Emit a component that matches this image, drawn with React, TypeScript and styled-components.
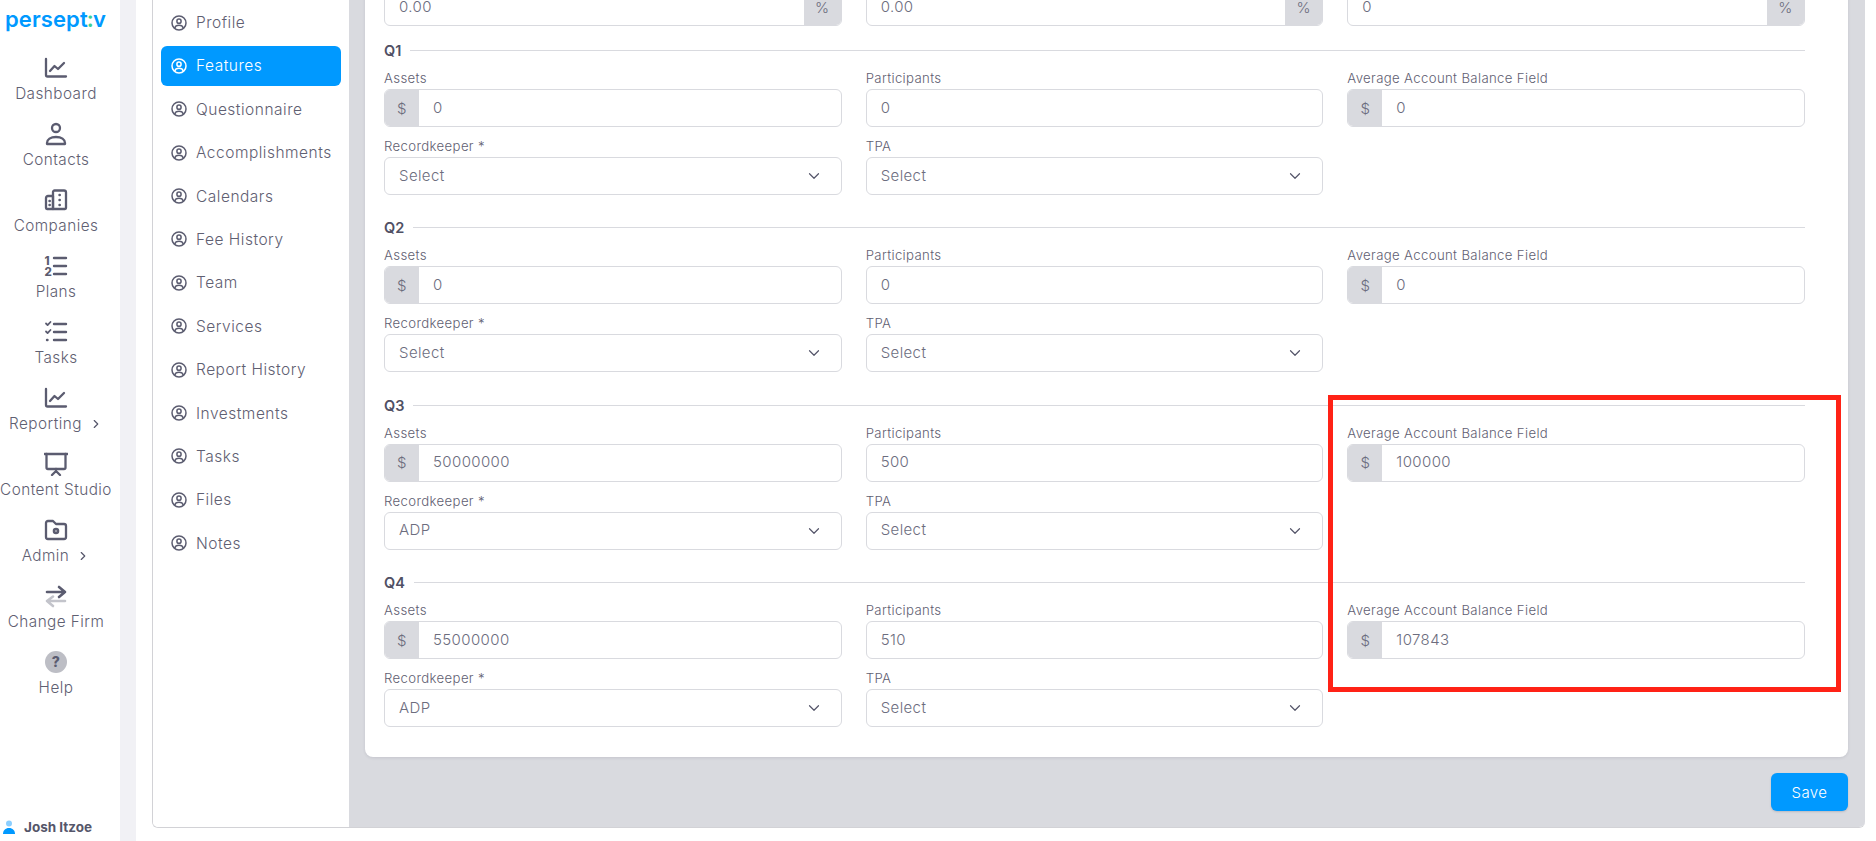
import React from 'react';
import styled, { createGlobalStyle } from 'styled-components';
import { ChevronDown, ChevronRight } from 'lucide-react';

const GlobalStyle = createGlobalStyle`
  html, body {
    margin: 0;
    padding: 0;
    background: #ffffff;
  }
  body {
    font-family: Inter, "Open Sans", sans-serif;
    font-weight: 300;
    color: #5f6072;
    overflow: hidden;
  }
`;

const Page = styled.div`
  position: relative;
  display: flex;
  width: 1876px;
  height: 841px;
  overflow: hidden;
`;

const Rail = styled.nav`
  width: 120px;
  flex-shrink: 0;
  display: flex;
  flex-direction: column;
  background: #ffffff;
`;

const Logo = styled.div`
  height: 43px;
  padding: 5px 0 0 5px;
  box-sizing: border-box;
  font-size: 22px;
  line-height: 28px;
  font-weight: 600;
  letter-spacing: 0.1px;
  color: #0099ff;
  white-space: nowrap;

  span {
    color: #3ccf91;
    margin: 0 -1px;
  }
`;

const RailItems = styled.div`
  display: flex;
  flex-direction: column;
  flex: 1;
`;

const RailItem = styled.a`
  width: 112px;
  height: 66px;
  display: flex;
  flex-direction: column;
  align-items: center;
  justify-content: flex-start;
  gap: 4px;
  padding-top: 13px;
  box-sizing: border-box;
  font-size: 15.3px;
  line-height: 20px;
  letter-spacing: 0.45px;
  color: #5f6072;
  white-space: nowrap;

  svg.rail-icon {
    width: 24px;
    height: 24px;
    flex-shrink: 0;
  }
`;

const RailLabel = styled.span`
  display: flex;
  align-items: center;
  gap: 7px;

  svg {
    color: #55566a;
  }
`;

const UserRow = styled.div`
  height: 29px;
  padding: 0 0 0 2px;
  display: flex;
  align-items: center;
  gap: 8px;
  font-size: 13.5px;
  font-weight: 700;
  color: #55566a;
  white-space: nowrap;
`;

const Strip = styled.div`
  width: 16px;
  flex-shrink: 0;
  background: #f1f1f5;
`;

const Panel = styled.main`
  display: flex;
  flex: 1;
  min-width: 0;
  height: 828px;
  margin: 0 11px 0 16px;
  border-left: 1px solid #d2d2d6;
  border-bottom: 1px solid #d2d2d6;
  border-radius: 0 0 6px 6px;
  box-sizing: border-box;
  overflow: hidden;
`;

const SubNav = styled.aside`
  width: 196px;
  flex-shrink: 0;
  display: flex;
  flex-direction: column;
  gap: 3.4px;
  padding: 3px 8px 0;
  box-sizing: border-box;
  background: #ffffff;
`;

const SubNavItem = styled.a<{ $active?: boolean }>`
  height: 40px;
  display: flex;
  align-items: center;
  gap: 9px;
  padding: 0 0 1px 10px;
  box-sizing: border-box;
  border-radius: 6px;
  font-size: 15.5px;
  letter-spacing: 0.5px;
  white-space: nowrap;
  background: ${(p) => (p.$active ? '#0099ff' : 'transparent')};
  color: ${(p) => (p.$active ? '#ffffff' : '#5f6072')};
`;

const Workspace = styled.section`
  flex: 1;
  min-width: 0;
  display: flex;
  flex-direction: column;
  justify-content: flex-end;
  gap: 16px;
  padding: 0 17px 16px 16px;
  background: #d9dadf;
  overflow: hidden;
`;

const Card = styled.div`
  flex-shrink: 0;
  display: flex;
  flex-direction: column;
  padding: 0 43px 30px 19px;
  background: #ffffff;
  border-radius: 0 0 8px 8px;
  box-shadow: 0 1px 3px rgba(60, 60, 80, 0.12);
`;

const Grid = styled.div`
  display: grid;
  grid-template-columns: repeat(3, 1fr);
  column-gap: 24px;
  row-gap: 12px;
`;

const Quarter = styled.div`
  display: flex;
  flex-direction: column;
  gap: 8.7px;
  margin-top: 20.6px;

  ${Grid} + & {
    margin-top: 12.4px;
  }
`;

const QuarterTitle = styled.div`
  height: 24px;
  display: flex;
  align-items: center;
  gap: 9px;
  font-size: 14.5px;
  font-weight: 600;
  color: #4f5064;

  &::after {
    content: '';
    flex: 1;
    height: 1px;
    background: #d9dadf;
  }
`;

const Field = styled.div`
  display: flex;
  flex-direction: column;
`;

const Label = styled.label`
  height: 18px;
  font-size: 13.2px;
  line-height: 15px;
  letter-spacing: 0.35px;
  color: #5f6072;
  white-space: nowrap;
`;

const Control = styled.div`
  height: 38px;
  display: flex;
  align-items: center;
  border: 1px solid #d9dadf;
  border-radius: 6px;
  box-sizing: border-box;
  background: #ffffff;
  overflow: hidden;
  font-size: 15px;
  letter-spacing: 0.4px;
  color: #6c6d7e;
`;

const Addon = styled.span<{ $wide?: boolean }>`
  align-self: stretch;
  margin: -1px 0;
  width: ${(p) => (p.$wide ? '37px' : '34px')};
  flex-shrink: 0;
  display: flex;
  align-items: center;
  justify-content: center;
  background: #d9dadf;
  color: #6c6d7e;
`;

const Value = styled.span`
  flex: 1;
  padding: 0 14px 2px;
`;

const SelectArrow = styled(ChevronDown)`
  margin-right: 18px;
  color: #55566a;
`;

const Footer = styled.div`
  flex-shrink: 0;
  display: flex;
  justify-content: flex-end;
`;

const SaveButton = styled.button`
  width: 77px;
  height: 38px;
  border: none;
  border-radius: 6px;
  background: #0099ff;
  color: #ffffff;
  font-family: inherit;
  font-size: 15px;
  font-weight: 300;
  letter-spacing: 0.4px;
  box-shadow: 0 1px 2px rgba(60, 60, 80, 0.2);
`;

const Annotation = styled.div`
  position: absolute;
  left: 1328px;
  top: 395px;
  width: 513px;
  height: 297px;
  box-sizing: border-box;
  border: 5px solid #ff2216;
  pointer-events: none;
`;

const stroke = {
  fill: 'none',
  stroke: '#5b5c70',
  strokeWidth: 2.3,
  strokeLinecap: 'round' as const,
  strokeLinejoin: 'round' as const,
};

const DashboardIcon = () => (
  <svg className="rail-icon" viewBox="0 0 24 24" {...stroke}>
    <path d="M2 3v16a1.5 1.5 0 0 0 1.5 1.5H22" />
    <path d="M6 15l4.5-5 3.5 3 6-6" />
  </svg>
);

const ContactIcon = () => (
  <svg className="rail-icon" viewBox="0 0 24 24" {...stroke}>
    <circle cx="12" cy="6" r="4" />
    <path d="M3 22v-1c0-3.500 3.500-6 9-6s9 2.500 9 6v1z" />
  </svg>
);

const CompanyIcon = () => (
  <svg className="rail-icon" viewBox="0 0 24 24" {...stroke}>
    <path d="M9 8H4a2 2 0 0 0-2 2v10a1 1 0 0 0 1 1h6z" />
    <path d="M9 21V4a1.500 1.500 0 0 1 1.500-1.500H20a2 2 0 0 1 2 2V20a1 1 0 0 1-1 1z" />
    <path d="M5.500 13h.3M5.500 17h.3M15.500 7h.3M15.500 12h.3M15.500 17h.3" strokeWidth="2.4" />
  </svg>
);

const PlansIcon = () => (
  <svg className="rail-icon" viewBox="0 0 24 24">
    <text x="0.5" y="10.500" fontSize="11.5" fontWeight="800" fontFamily="Inter, sans-serif" fill="#5b5c70">1</text>
    <text x="0.5" y="22" fontSize="11.5" fontWeight="800" fontFamily="Inter, sans-serif" fill="#5b5c70">2</text>
    <path d="M10 4h12M10 12h12M10 20h12" {...stroke} strokeWidth="2.4" />
  </svg>
);

const TasksIcon = () => (
  <svg className="rail-icon" viewBox="0 0 24 24" {...stroke}>
    <path d="M10 4h12M10 12h12M10 20h12" strokeWidth="2.4" />
    <path d="M2 3.500l1.600 1.600L6.500 2M2 11.500l1.600 1.600 2.900-3.100" strokeWidth="1.800" />
    <path d="M3 20h.5" strokeWidth="2.400" />
  </svg>
);

const StudioIcon = () => (
  <svg className="rail-icon" viewBox="0 0 24 24" {...stroke}>
    <path d="M0.500 2h23" />
    <path d="M2.500 2v13.500a1.500 1.500 0 0 0 1.500 1.500h16a1.500 1.500 0 0 0 1.500-1.500V2" />
    <path d="M12 17v2M8 23l4-4 4 4" />
  </svg>
);

const AdminIcon = () => (
  <svg className="rail-icon" viewBox="0 0 24 24" {...stroke}>
    <path d="M2 5a2 2 0 0 1 2-2h5l3 3h8a2 2 0 0 1 2 2v11a2 2 0 0 1-2 2H4a2 2 0 0 1-2-2z" />
    <circle cx="12" cy="13" r="2" strokeWidth="2.600" />
  </svg>
);

const ChangeIcon = () => (
  <svg className="rail-icon" viewBox="0 0 24 24" {...stroke} strokeWidth="2.600">
    <path d="M3 8h18M15 3l6 5-6 5" />
    <path d="M21 17H3M9 12.500l-6 4.500 6 5" stroke="#c3c4cb" />
  </svg>
);

const HelpIcon = () => (
  <svg className="rail-icon" viewBox="0 0 24 24">
    <circle cx="12" cy="12" r="11" fill="#bdbec5" />
    <text x="12" y="17" textAnchor="middle" fontSize="14" fontWeight="800" fontFamily="Inter, sans-serif" fill="#5b5c70">?</text>
  </svg>
);

const ProfileIcon = ({ color }: { color: string }) => (
  <svg width="16" height="16" viewBox="0 0 16 16" fill="none" stroke={color} strokeWidth="1.500" style={{ flexShrink: 0 }}>
    <circle cx="8" cy="8" r="7" />
    <circle cx="8" cy="6.200" r="2.100" />
    <path d="M3.600 13.200c.6-2 2.300-2.900 4.400-2.900s3.800.9 4.400 2.900" />
  </svg>
);

const UserIcon = () => (
  <svg width="14" height="14" viewBox="0 0 14 14">
    <circle cx="7" cy="3.400" r="3" fill="#8ccfff" />
    <path d="M1 14c0-3.600 2.400-6 6-6s6 2.400 6 6z" fill="#0099ff" />
  </svg>
);

const railItems: { label: string; icon: React.ReactNode; more?: boolean }[] = [
  { label: 'Dashboard', icon: <DashboardIcon /> },
  { label: 'Contacts', icon: <ContactIcon /> },
  { label: 'Companies', icon: <CompanyIcon /> },
  { label: 'Plans', icon: <PlansIcon /> },
  { label: 'Tasks', icon: <TasksIcon /> },
  { label: 'Reporting', icon: <DashboardIcon />, more: true },
  { label: 'Content Studio', icon: <StudioIcon /> },
  { label: 'Admin', icon: <AdminIcon />, more: true },
  { label: 'Change Firm', icon: <ChangeIcon /> },
  { label: 'Help', icon: <HelpIcon /> },
];

const subNavItems = [
  'Profile',
  'Features',
  'Questionnaire',
  'Accomplishments',
  'Calendars',
  'Fee History',
  'Team',
  'Services',
  'Report History',
  'Investments',
  'Tasks',
  'Files',
  'Notes',
];

interface QuarterData {
  name: string;
  assets: string;
  participants: string;
  balance: string;
  recordkeeper: string;
}

const quarters: QuarterData[] = [
  { name: 'Q1', assets: '0', participants: '0', balance: '0', recordkeeper: 'Select' },
  { name: 'Q2', assets: '0', participants: '0', balance: '0', recordkeeper: 'Select' },
  { name: 'Q3', assets: '50000000', participants: '500', balance: '100000', recordkeeper: 'ADP' },
  { name: 'Q4', assets: '55000000', participants: '510', balance: '107843', recordkeeper: 'ADP' },
];

const Select = ({ value }: { value: string }) => (
  <Control>
    <Value>{value}</Value>
    <SelectArrow size={18} strokeWidth={1.6} />
  </Control>
);

export default function App() {
  return (
    <Page>
      <GlobalStyle />
      <Rail>
        <Logo>
          persept<span>:</span>v
        </Logo>
        <RailItems>
          {railItems.map((item) => (
            <RailItem key={item.label}>
              {item.icon}
              <RailLabel>
                {item.label}
                {item.more && <ChevronRight size={14} strokeWidth={2} />}
              </RailLabel>
            </RailItem>
          ))}
        </RailItems>
        <UserRow>
          <UserIcon />
          Josh Itzoe
        </UserRow>
      </Rail>
      <Strip />
      <Panel>
        <SubNav>
          {subNavItems.map((name) => (
            <SubNavItem key={name} $active={name === 'Features'}>
              <ProfileIcon color={name === 'Features' ? '#ffffff' : '#5b5c70'} />
              {name}
            </SubNavItem>
          ))}
        </SubNav>
        <Workspace>
          <Card>
            <Grid>
              <Control>
                <Value>0.00</Value>
                <Addon $wide>%</Addon>
              </Control>
              <Control>
                <Value>0.00</Value>
                <Addon $wide>%</Addon>
              </Control>
              <Control>
                <Value>0</Value>
                <Addon $wide>%</Addon>
              </Control>
            </Grid>
            {quarters.map((q) => (
              <Quarter key={q.name}>
                <QuarterTitle>{q.name}</QuarterTitle>
                <Grid>
                  <Field>
                    <Label>Assets</Label>
                    <Control>
                      <Addon>$</Addon>
                      <Value>{q.assets}</Value>
                    </Control>
                  </Field>
                  <Field>
                    <Label>Participants</Label>
                    <Control>
                      <Value>{q.participants}</Value>
                    </Control>
                  </Field>
                  <Field>
                    <Label>Average Account Balance Field</Label>
                    <Control>
                      <Addon>$</Addon>
                      <Value>{q.balance}</Value>
                    </Control>
                  </Field>
                  <Field>
                    <Label>Recordkeeper *</Label>
                    <Select value={q.recordkeeper} />
                  </Field>
                  <Field>
                    <Label>TPA</Label>
                    <Select value="Select" />
                  </Field>
                </Grid>
              </Quarter>
            ))}
          </Card>
          <Footer>
            <SaveButton>Save</SaveButton>
          </Footer>
        </Workspace>
      </Panel>
      <Annotation />
    </Page>
  );
}
